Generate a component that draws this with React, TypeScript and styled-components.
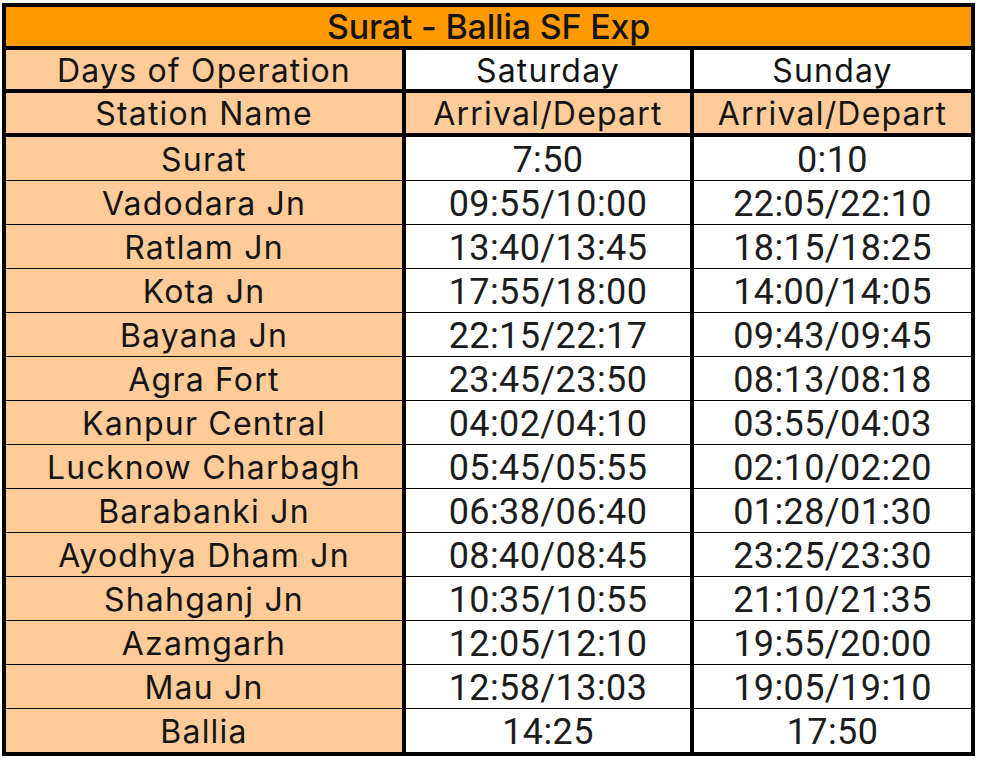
import React from 'react'
import styled, { createGlobalStyle } from 'styled-components'

const TITLE_BG = '#FF9900'
const PEACH = '#FFCC99'

const GlobalStyle = createGlobalStyle`
    html, body {
        margin: 0;
        padding: 0;
        background: #ffffff;
    }
`

const Page = styled.div`
    padding: 3px 0 0 2px;
    width: 981px;
    height: 763px;
    box-sizing: border-box;
`

const Sheet = styled.div`
    width: 973px;
    border: 4px solid #000;
    box-sizing: border-box;
    color: #141414;
`

const TitleBar = styled.div`
    height: 43px;
    background: ${TITLE_BG};
    border-bottom: 4px solid #000;
    box-sizing: border-box;
    display: flex;
    align-items: center;
    justify-content: center;
    font-family: Inter, "Noto Sans", sans-serif;
    font-weight: 500;
    font-size: 34px;
    letter-spacing: -0.2px;
    line-height: 1;
    padding-top: 1px;
`

const Row = styled.div<{ $height: number; $line: number }>`
    display: grid;
    grid-template-columns: 400px 288px 1fr;
    height: ${p => p.$height + p.$line}px;
    border-bottom: ${p => p.$line}px solid #000;
    box-sizing: border-box;
    &:last-child {
        border-bottom: none;
        height: ${p => p.$height}px;
    }
`

const Cell = styled.div<{ $peach?: boolean; $mono?: boolean; $last?: boolean }>`
    display: flex;
    align-items: center;
    justify-content: center;
    background: ${p => (p.$peach ? PEACH : '#fff')};
    border-right: ${p => (p.$last ? 'none' : '4px solid #000')};
    box-sizing: border-box;
    white-space: nowrap;
    line-height: 1;
    font-family: ${p => (p.$mono ? 'Roboto, Inter, sans-serif' : 'Inter, "Noto Sans", sans-serif')};
    font-weight: 400;
    font-size: ${p => (p.$mono ? '36px' : '32px')};
    letter-spacing: ${p => (p.$mono ? '0.4px' : '1.2px')};
    color: ${p => (p.$mono ? '#1c1c1c' : '#141414')};
    padding-top: 2px;
`

const stops: [string, string, string][] = [
    ['Surat', '7:50', '0:10'],
    ['Vadodara Jn', '09:55/10:00', '22:05/22:10'],
    ['Ratlam Jn', '13:40/13:45', '18:15/18:25'],
    ['Kota Jn', '17:55/18:00', '14:00/14:05'],
    ['Bayana Jn', '22:15/22:17', '09:43/09:45'],
    ['Agra Fort', '23:45/23:50', '08:13/08:18'],
    ['Kanpur Central', '04:02/04:10', '03:55/04:03'],
    ['Lucknow Charbagh', '05:45/05:55', '02:10/02:20'],
    ['Barabanki Jn', '06:38/06:40', '01:28/01:30'],
    ['Ayodhya Dham Jn', '08:40/08:45', '23:25/23:30'],
    ['Shahganj Jn', '10:35/10:55', '21:10/21:35'],
    ['Azamgarh', '12:05/12:10', '19:55/20:00'],
    ['Mau Jn', '12:58/13:03', '19:05/19:10'],
    ['Ballia', '14:25', '17:50'],
]

const App: React.FC = () => {
    return (
        <Page>
            <GlobalStyle />
            <Sheet>
                <TitleBar>Surat - Ballia SF Exp</TitleBar>
                <Row $height={39} $line={4}>
                    <Cell $peach>Days of Operation</Cell>
                    <Cell>Saturday</Cell>
                    <Cell $last>Sunday</Cell>
                </Row>
                <Row $height={40} $line={4}>
                    <Cell $peach>Station Name</Cell>
                    <Cell $peach>Arrival/Depart</Cell>
                    <Cell $peach $last>Arrival/Depart</Cell>
                </Row>
                {stops.map(([name, sat, sun]) => (
                    <Row key={name} $height={43} $line={1}>
                        <Cell $peach>{name}</Cell>
                        <Cell $mono>{sat}</Cell>
                        <Cell $mono $last>{sun}</Cell>
                    </Row>
                ))}
            </Sheet>
        </Page>
    )
}

export default App
